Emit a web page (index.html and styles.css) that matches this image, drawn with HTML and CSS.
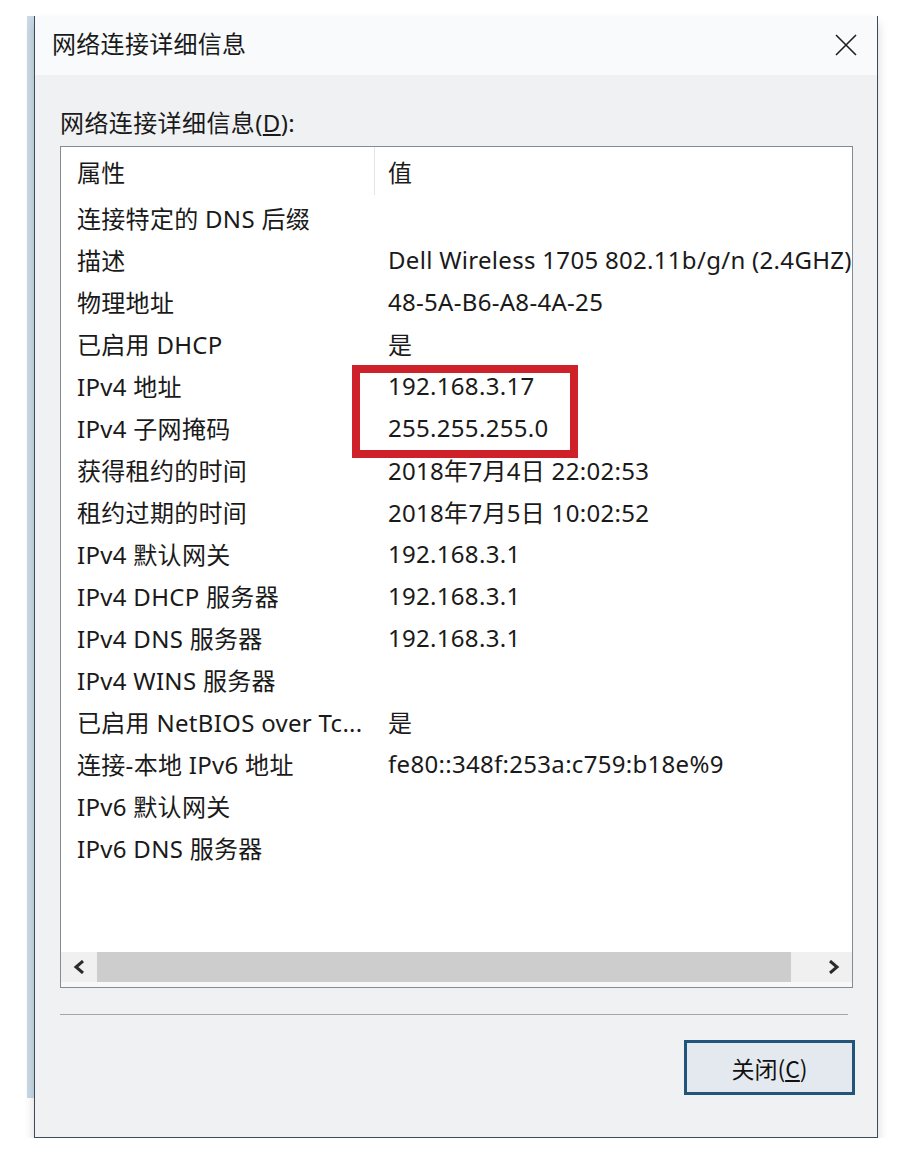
FILE: index.html
```html
<!DOCTYPE html>
<html lang="zh-CN">
<head>
<meta charset="utf-8">
<title>网络连接详细信息</title>
<link rel="stylesheet" href="styles.css">
</head>
<body>
<div class="page">
  <div class="strip"></div>
  <div class="dialog">
    <div class="titlebar">
      <span class="title">网络连接详细信息</span>
      <svg class="close" width="22" height="22" viewBox="0 0 22 22"><path d="M1 1 L21 21 M21 1 L1 21" stroke="#1e1e1e" stroke-width="1.6" fill="none"/></svg>
    </div>
    <div class="body">
      <div class="label">网络连接详细信息(<u>D</u>):</div>
      <div class="listview">
        <div class="row header">
          <div class="c1 sep">属性</div>
          <div class="c2">值</div>
        </div>
        <div class="row"><div class="c1">连接特定的 DNS 后缀</div><div class="c2"></div></div>
        <div class="row"><div class="c1">描述</div><div class="c2">Dell Wireless 1705 802.11b/g/n (2.4GHZ)</div></div>
        <div class="row"><div class="c1">物理地址</div><div class="c2">48-5A-B6-A8-4A-25</div></div>
        <div class="row"><div class="c1">已启用 DHCP</div><div class="c2">是</div></div>
        <div class="row"><div class="c1">IPv4 地址</div><div class="c2">192.168.3.17</div></div>
        <div class="row"><div class="c1">IPv4 子网掩码</div><div class="c2">255.255.255.0</div></div>
        <div class="row"><div class="c1">获得租约的时间</div><div class="c2">2018年7月4日 22:02:53</div></div>
        <div class="row"><div class="c1">租约过期的时间</div><div class="c2">2018年7月5日 10:02:52</div></div>
        <div class="row"><div class="c1">IPv4 默认网关</div><div class="c2">192.168.3.1</div></div>
        <div class="row"><div class="c1">IPv4 DHCP 服务器</div><div class="c2">192.168.3.1</div></div>
        <div class="row"><div class="c1">IPv4 DNS 服务器</div><div class="c2">192.168.3.1</div></div>
        <div class="row"><div class="c1">IPv4 WINS 服务器</div><div class="c2"></div></div>
        <div class="row"><div class="c1">已启用 NetBIOS over Tc...</div><div class="c2">是</div></div>
        <div class="row"><div class="c1">连接-本地 IPv6 地址</div><div class="c2">fe80::348f:253a:c759:b18e%9</div></div>
        <div class="row"><div class="c1">IPv6 默认网关</div><div class="c2"></div></div>
        <div class="row"><div class="c1">IPv6 DNS 服务器</div><div class="c2"></div></div>
        <div class="spacer"></div>
        <div class="hscroll">
          <div class="arrow"><svg width="12" height="14" viewBox="0 0 12 14"><path d="M10 1 L3 7 L10 13" stroke="#2b2b2b" stroke-width="3" fill="none"/></svg></div>
          <div class="track"><div class="thumb"></div></div>
          <div class="arrow"><svg width="12" height="14" viewBox="0 0 12 14"><path d="M2 1 L9 7 L2 13" stroke="#2b2b2b" stroke-width="3" fill="none"/></svg></div>
        </div>
        <div class="bottompad"></div>
        <div class="highlight"></div>
      </div>
      <div class="separator"></div>
      <div class="actions">
        <button class="btn">关闭(<u>C</u>)</button>
      </div>
    </div>
  </div>
</div>
</body>
</html>
```

FILE: styles.css
```css
html, body {
  margin: 0;
  padding: 0;
  background: #ffffff;
}
body {
  font-family: "Noto Sans", "Noto Sans CJK SC", sans-serif;
  color: #1a1a1a;
}
.page {
  display: flex;
  align-items: flex-start;
  padding-top: 16px;
  padding-left: 27px;
}
.strip {
  width: 7px;
  height: 1082px;
  background: #c9dae6;
}
.dialog {
  width: 842px;
  border-left: 1px solid #3d4a57;
  border-right: 1px solid #3d4a57;
  border-bottom: 1px solid #3d4a57;
  box-shadow: 0 7px 10px rgba(0, 0, 0, 0.16);
}
.titlebar {
  height: 59px;
  background: #f8fafc;
  display: flex;
  align-items: center;
  justify-content: space-between;
  padding: 0 20px 4px 17px;
  box-sizing: border-box;
}
.title {
  font-size: 24px;
  line-height: 28px;
  letter-spacing: 0.3px;
}
.close {
  display: block;
  margin-top: 2px;
}
.body {
  background: #f0f1f3;
  padding: 34px 24px 42px 25px;
}
.label {
  font-size: 24px;
  line-height: 28px;
  letter-spacing: 0.4px;
  margin-bottom: 9px;
}
.listview {
  position: relative;
  height: 842px;
  box-sizing: border-box;
  border: 1px solid #868b92;
  background: #ffffff;
  display: flex;
  flex-direction: column;
}
.row {
  display: flex;
  height: 42px;
  box-sizing: border-box;
  padding-top: 3px;
  align-items: center;
  font-size: 24px;
  letter-spacing: 0.3px;
  white-space: nowrap;
}
.row.header {
  height: 48px;
  padding-top: 0;
  align-items: stretch;
}
.row.header .c1, .row.header .c2 {
  display: flex;
  align-items: center;
  padding-bottom: 0;
}
.c1 {
  width: 314px;
  box-sizing: border-box;
  padding-left: 16px;
  overflow: hidden;
  flex: none;
}
.c1.sep {
  border-right: 1px solid #e2e4e6;
}
.c2 {
  flex: 1;
  padding-left: 13px;
  overflow: hidden;
  min-width: 0;
}
.spacer {
  flex: 1;
}
.hscroll {
  height: 30px;
  display: flex;
  background: #f0f0f0;
}
.arrow {
  width: 36px;
  display: flex;
  align-items: center;
  justify-content: center;
  flex: none;
}
.track {
  flex: 1;
  display: flex;
}
.thumb {
  width: 694px;
  background: #cdcdcd;
}
.bottompad {
  height: 5px;
  background: #f8f8f8;
}
.highlight {
  position: absolute;
  left: 291px;
  top: 218px;
  width: 226px;
  height: 93px;
  box-sizing: border-box;
  border: 8px solid #cf2129;
}
.separator {
  margin-top: 26px;
  margin-right: 5px;
  height: 1px;
  background: #a3a5a8;
}
.actions {
  display: flex;
  justify-content: flex-end;
  margin-top: 25px;
  margin-right: -2px;
}
.btn {
  width: 171px;
  height: 55px;
  box-sizing: border-box;
  border: 3px solid #22557a;
  background: #e3e9ef;
  font-family: "Noto Sans CJK SC", "Noto Sans", sans-serif;
  font-size: 23px;
  color: #111;
  padding: 0;
  margin: 0;
}
```
